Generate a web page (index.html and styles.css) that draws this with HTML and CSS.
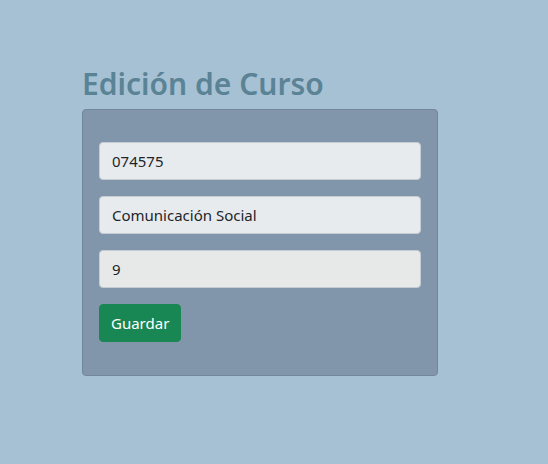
FILE: index.html
```html
<!DOCTYPE html>
<html lang="es">
<head>
<meta charset="utf-8">
<title>Edición de Curso</title>
<link rel="stylesheet" href="styles.css">
</head>
<body>
<main class="page">
  <h1 class="title">Edición de Curso</h1>
  <form class="card">
    <input class="field" type="text" value="074575">
    <input class="field" type="text" value="Comunicación Social">
    <input class="field field-num" type="text" value="9">
    <div class="actions"><button class="btn" type="button">Guardar</button></div>
  </form>
</main>
</body>
</html>
```
FILE: styles.css
```css
* { box-sizing: border-box; }
html, body { margin: 0; padding: 0; }
body {
  background: #a7c1d4;
  font-family: "Noto Sans", "Open Sans", sans-serif;
  width: 548px;
  height: 464px;
  overflow: hidden;
}
.page {
  padding: 64px 0 0 82px;
}
.title {
  margin: 0 0 6px 0;
  font-size: 30px;
  line-height: 39px;
  font-weight: 600;
  color: #5a8395;
}
.card {
  width: 356px;
  height: 267px;
  background: #8196aa;
  border: 1px solid #71879c;
  border-radius: 4px;
  padding: 32px 16px 0 16px;
  display: flex;
  flex-direction: column;
  gap: 16px;
}
.field {
  display: block;
  width: 322px;
  height: 38px;
  padding: 0 12px;
  background: #e8ebee;
  border: 1px solid #c5ccd3;
  border-radius: 4px;
  font-family: inherit;
  font-size: 15px;
  color: #212529;
}
.field-num { background: #e6e9e8; }
.actions { display: flex; }
.btn {
  height: 38px;
  padding: 0 11px;
  background: #198754;
  color: #ffffff;
  border: 1px solid #198754;
  border-radius: 4px;
  font-family: inherit;
  font-size: 15px;
}
```
